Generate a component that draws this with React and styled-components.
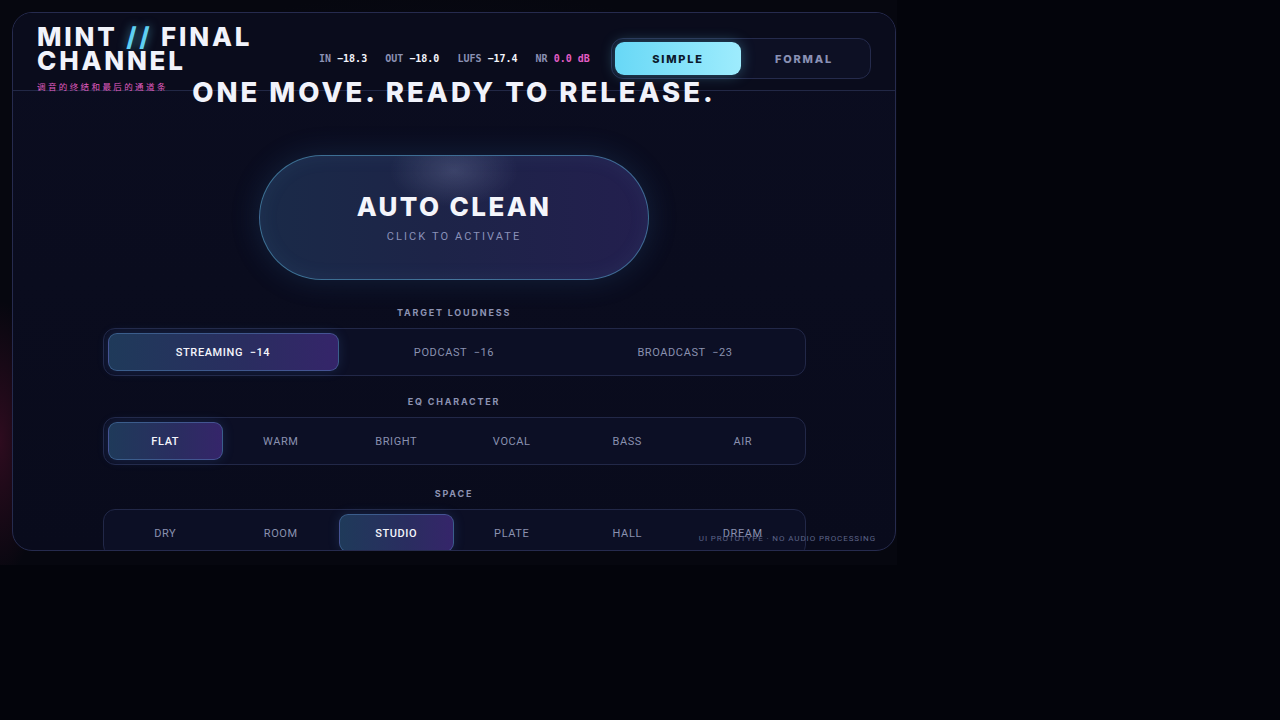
import React from "react";
import styled, { createGlobalStyle } from "styled-components";

const Global = createGlobalStyle`
  html, body { margin: 0; padding: 0; background: #03040b; }
  body { font-family: Inter, "Noto Sans", sans-serif; color: #eef0fa; }
  * { box-sizing: border-box; }
`;

const Stage = styled.div`
  width: 897px;
  height: 565px;
  padding: 12px 1px 14px 12px;
  background:
    radial-gradient(ellipse 60px 200px at 0% 78%, rgba(120, 20, 60, 0.35), transparent 70%),
    radial-gradient(ellipse 500px 300px at 50% 40%, rgba(20, 24, 60, 0.35), transparent 80%),
    #06070f;
`;

const Panel = styled.div`
  position: relative;
  width: 884px;
  height: 539px;
  border-radius: 20px;
  border: 1px solid #262b4e;
  background: linear-gradient(180deg, #0b0d20 0%, #090b1c 100%);
  overflow: hidden;
  display: flex;
  flex-direction: column;
`;

const Header = styled.header`
  flex: 0 0 78px;
  height: 78px;
  min-height: 0;
  display: flex;
  align-items: flex-start;
  padding: 0 24px;
  border-bottom: 1px solid #222846;
  background: #0a0c1c;
`;

const Brand = styled.div`
  padding-top: 12px;
  display: flex;
  flex-direction: column;
  width: 282px;
`;

const BrandTitle = styled.h1`
  margin: 0;
  font-family: Inter, sans-serif;
  font-weight: 800;
  font-size: 26px;
  line-height: 24px;
  letter-spacing: 2.8px;
  color: #f1f3fb;
`;

const Slash = styled.span`
  color: #5fd0f2;
  text-shadow: 0 0 10px rgba(95, 208, 242, 0.6);
`;

const BrandSub = styled.div`
  margin-top: 7px;
  font-family: "Noto Sans CJK SC", sans-serif;
  font-size: 8.5px;
  letter-spacing: 2.4px;
  color: #e05cc0;
`;

const Meters = styled.div`
  margin-top: 40px;
  display: flex;
  gap: 18px;
  font-family: "DejaVu Sans Mono", monospace;
  font-size: 10px;
  font-weight: 700;
`;

const Meter = styled.span`
  color: #8a91b4;
  white-space: nowrap;
`;

const MeterVal = styled.span`
  color: ${(p) => (p.$pink ? "#e45cc4" : "#f4f5fb")};
`;

const Toggle = styled.div`
  margin-top: 25px;
  margin-left: auto;
  width: 260px;
  height: 41px;
  padding: 3px;
  display: grid;
  grid-template-columns: 1fr 1fr;
  border-radius: 12px;
  border: 1px solid #252b4c;
  background: #0d1024;
`;

const ToggleBtn = styled.div`
  display: flex;
  align-items: center;
  justify-content: center;
  border-radius: 9px;
  font-family: Inter, sans-serif;
  font-size: 11px;
  font-weight: 800;
  letter-spacing: 1.8px;
  color: ${(p) => (p.$active ? "#0b1a2c" : "#8a91b4")};
  background: ${(p) =>
    p.$active ? "linear-gradient(90deg, #68d8f6 0%, #9eecfd 100%)" : "transparent"};
  box-shadow: ${(p) => (p.$active ? "0 0 14px rgba(104, 216, 246, 0.35)" : "none")};
`;

const Main = styled.main`
  flex: 1;
  display: flex;
  flex-direction: column;
  align-items: center;
  padding: 0 90px;
`;

const Headline = styled.h2`
  margin: -17px 0 0;
  font-family: Inter, sans-serif;
  font-weight: 800;
  font-size: 27.5px;
  line-height: 36px;
  letter-spacing: 3px;
  color: #f1f3fb;
  white-space: nowrap;
`;

const CleanButton = styled.button`
  margin-top: 45px;
  width: 390px;
  height: 125px;
  border-radius: 63px;
  border: 1px solid rgba(90, 170, 210, 0.55);
  background:
    radial-gradient(ellipse 80px 45px at 50% 12%, rgba(140, 150, 190, 0.28), transparent 80%),
    linear-gradient(90deg, #1a2a48 0%, #1d2448 45%, #231f4e 100%);
  box-shadow: 0 0 30px rgba(60, 130, 200, 0.18), inset 0 0 20px rgba(90, 170, 220, 0.08);
  display: flex;
  flex-direction: column;
  align-items: center;
  justify-content: center;
  cursor: pointer;
  padding: 0;
`;

const CleanTitle = styled.span`
  font-family: Inter, sans-serif;
  font-weight: 800;
  font-size: 26px;
  letter-spacing: 2.4px;
  color: #f4f5fb;
  line-height: 30px;
`;

const CleanSub = styled.span`
  margin-top: 8px;
  font-family: Roboto, sans-serif;
  font-size: 11px;
  letter-spacing: 2.1px;
  color: #8a91b8;
`;

const Section = styled.section`
  width: 703px;
  display: flex;
  flex-direction: column;
  align-items: center;
  margin-top: ${(p) => p.$mt}px;
`;

const Label = styled.div`
  font-family: Inter, sans-serif;
  font-weight: 700;
  font-size: 9px;
  line-height: 11px;
  letter-spacing: 1.8px;
  color: #8d93b3;
`;

const Segments = styled.div`
  margin-top: 10px;
  width: 100%;
  height: 48px;
  padding: 4px;
  display: grid;
  grid-template-columns: repeat(${(p) => p.$n}, 1fr);
  border-radius: 12px;
  border: 1px solid #222848;
  background: #0c0f25;
`;

const Segment = styled.div`
  display: flex;
  align-items: center;
  justify-content: center;
  border-radius: 9px;
  font-family: Roboto, sans-serif;
  font-size: 11px;
  font-weight: ${(p) => (p.$active ? 500 : 400)};
  letter-spacing: 0.6px;
  white-space: pre;
  color: ${(p) => (p.$active ? "#f4f5fb" : "#8a91b0")};
  border: 1px solid ${(p) => (p.$active ? "rgba(90, 140, 200, 0.45)" : "transparent")};
  background: ${(p) =>
    p.$active ? "linear-gradient(90deg, #1f3a5a 0%, #2a2d60 60%, #35256a 100%)" : "transparent"};
  box-shadow: ${(p) => (p.$active ? "0 0 12px rgba(70, 120, 200, 0.2)" : "none")};
`;

const Footnote = styled.div`
  position: absolute;
  right: 19px;
  bottom: 7px;
  font-family: Roboto, sans-serif;
  font-size: 8px;
  letter-spacing: 0.9px;
  color: #5d6488;
`;

const loud = ["STREAMING  \u221214", "PODCAST  \u221216", "BROADCAST  \u221223"];
const eq = ["FLAT", "WARM", "BRIGHT", "VOCAL", "BASS", "AIR"];
const space = ["DRY", "ROOM", "STUDIO", "PLATE", "HALL", "DREAM"];

function SegGroup({ label, items, active, mt }) {
  return (
    <Section $mt={mt}>
      <Label>{label}</Label>
      <Segments $n={items.length}>
        {items.map((it) => (
          <Segment key={it} $active={it === active}>
            {it}
          </Segment>
        ))}
      </Segments>
    </Section>
  );
}

export default function App() {
  return (
    <>
      <Global />
      <Stage>
        <Panel>
          <Header>
            <Brand>
              <BrandTitle>
                MINT <Slash>//</Slash> FINAL
                <br />
                CHANNEL
              </BrandTitle>
              <BrandSub>调音的终结和最后的通道条</BrandSub>
            </Brand>
            <Meters>
              <Meter>
                IN <MeterVal>{"\u221218.3"}</MeterVal>
              </Meter>
              <Meter>
                OUT <MeterVal>{"\u221218.0"}</MeterVal>
              </Meter>
              <Meter>
                LUFS <MeterVal>{"\u221217.4"}</MeterVal>
              </Meter>
              <Meter>
                NR <MeterVal $pink>0.0 dB</MeterVal>
              </Meter>
            </Meters>
            <Toggle>
              <ToggleBtn $active>SIMPLE</ToggleBtn>
              <ToggleBtn>FORMAL</ToggleBtn>
            </Toggle>
          </Header>
          <Main>
            <Headline>ONE MOVE. READY TO RELEASE.</Headline>
            <CleanButton>
              <CleanTitle>AUTO CLEAN</CleanTitle>
              <CleanSub>CLICK TO ACTIVATE</CleanSub>
            </CleanButton>
            <SegGroup label="TARGET LOUDNESS" items={loud} active={loud[0]} mt={27} />
            <SegGroup label="EQ CHARACTER" items={eq} active="FLAT" mt={20} />
            <SegGroup label="SPACE" items={space} active="STUDIO" mt={23} />
          </Main>
          <Footnote>UI PROTOTYPE · NO AUDIO PROCESSING</Footnote>
        </Panel>
      </Stage>
    </>
  );
}
